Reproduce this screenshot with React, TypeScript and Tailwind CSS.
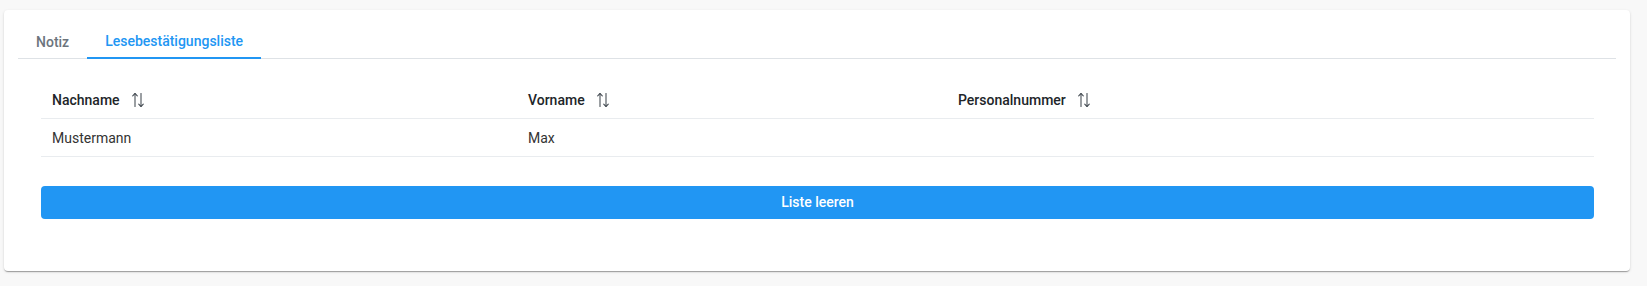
import React from "react";

function SortIcon() {
  return (
    <svg width="14" height="16" viewBox="0 0 14 16" fill="none" stroke="#495057" strokeWidth="1.1" strokeLinecap="round" strokeLinejoin="round" className="ml-[11px] shrink-0">
      <line x1="4" y1="1.5" x2="4" y2="14.5" />
      <polyline points="1.7,3.8 4,1.5 6.3,3.8" />
      <line x1="10" y1="1.5" x2="10" y2="14.5" />
      <polyline points="7.7,12.2 10,14.5 12.3,12.2" />
    </svg>
  );
}

export default function App() {
  const font = { fontFamily: "Roboto, 'Liberation Sans', sans-serif" };
  return (
    <div className="w-[1647px] h-[286px] bg-[#f8f8f8] pt-[10px] pl-[4px]" style={font}>
      <div className="w-[1626px] h-[261px] bg-white rounded-[4px] shadow-[0_2px_1px_-1px_rgba(0,0,0,0.2),0_1px_1px_0_rgba(0,0,0,0.14),0_1px_3px_0_rgba(0,0,0,0.12)] px-[14px] pt-[13px]">
        <div className="flex border-b border-[#dee2e6] h-[36px]">
          <div className="px-[18px] h-[36px] flex items-center text-[14px] font-medium text-[#6c757d] pt-[2px]">Notiz</div>
          <div className="px-[18px] h-[36px] flex items-center text-[14px] font-medium text-[#2196f3] border-b-[2px] border-[#2196f3] -mb-px pt-[3px]">
            Lesebestätigungsliste
          </div>
        </div>
        <div className="px-[23px] pr-[22px] pt-[23px]">
          <div className="grid grid-cols-[476px_430px_1fr] text-[14px]">
            <div className="h-[37px] flex items-center px-[11px] font-medium text-[#212529] border-b border-[#e9ecef]">
              Nachname
              <SortIcon />
            </div>
            <div className="h-[37px] flex items-center px-[11px] font-medium text-[#212529] border-b border-[#e9ecef]">
              Vorname
              <SortIcon />
            </div>
            <div className="h-[37px] flex items-center px-[11px] font-medium text-[#212529] border-b border-[#e9ecef]">
              Personalnummer
              <SortIcon />
            </div>
            <div className="h-[38px] flex items-center px-[11px] text-[#333333] border-b border-[#e9ecef] pt-[2px]">Mustermann</div>
            <div className="h-[38px] flex items-center px-[11px] text-[#333333] border-b border-[#e9ecef] pt-[2px]">Max</div>
            <div className="h-[38px] flex items-center px-[11px] text-[#333333] border-b border-[#e9ecef]"></div>
          </div>
          <button className="mt-[29px] w-full h-[33px] rounded-[4px] bg-[#2196f3] text-white text-[14px] font-medium flex items-center justify-center">
            Liste leeren
          </button>
        </div>
      </div>
    </div>
  );
}
